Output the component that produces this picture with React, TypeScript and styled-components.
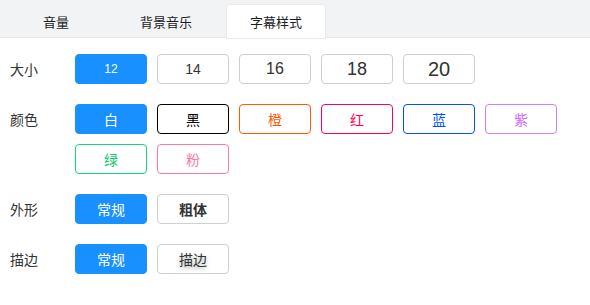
import { useState } from 'react';
import styled, { createGlobalStyle } from 'styled-components';

const GlobalStyle = createGlobalStyle`
  body {
    margin: 0;
    background: #ffffff;
    font-family: 'Noto Sans CJK SC', 'Noto Sans', sans-serif;
  }
`;

const tabs = ['音量', '背景音乐', '字幕样式'];
const sizes = [12, 14, 16, 18, 20];
const colors = [
  { name: '白', color: '#ffffff', border: '#1890ff' },
  { name: '黑', color: '#000000', border: '#000000' },
  { name: '橙', color: '#ff5a00', border: '#ff5a00' },
  { name: '红', color: '#ff0055', border: '#ff0055' },
  { name: '蓝', color: '#0050ff', border: '#0050ff' },
  { name: '紫', color: '#cf6bff', border: '#d47aff' },
  { name: '绿', color: '#12cc6e', border: '#12d67e' },
  { name: '粉', color: '#ff7aa2', border: '#ff7aa2' },
];

const App = () => {
  const [tab, setTab] = useState(2);
  const [size, setSize] = useState(12);
  const [color, setColor] = useState('白');
  const [shape, setShape] = useState('常规');
  const [stroke, setStroke] = useState('常规');

  return (
    <>
      <GlobalStyle />
      <Page>
        <TabBar>
          {tabs.map((t, i) => (
            <Tab key={t} $active={tab === i} onClick={() => setTab(i)}>
              {t}
            </Tab>
          ))}
        </TabBar>
        <Body>
          <Row>
            <Label>大小</Label>
            <Options>
              {sizes.map((s) => (
                <OptionBtn
                  key={s}
                  $active={size === s}
                  $font={s}
                  onClick={() => setSize(s)}
                >
                  {s}
                </OptionBtn>
              ))}
            </Options>
          </Row>
          <Row>
            <Label>颜色</Label>
            <Options>
              {colors.map((c) =>
                color === c.name ? (
                  <OptionBtn key={c.name} $active onClick={() => setColor(c.name)}>
                    {c.name}
                  </OptionBtn>
                ) : (
                  <ColorBtn
                    key={c.name}
                    $color={c.color}
                    $border={c.border}
                    onClick={() => setColor(c.name)}
                  >
                    {c.name}
                  </ColorBtn>
                )
              )}
            </Options>
          </Row>
          <Row>
            <Label>外形</Label>
            <Options>
              <OptionBtn $active={shape === '常规'} onClick={() => setShape('常规')}>
                常规
              </OptionBtn>
              <BoldBtn $active={shape === '粗体'} onClick={() => setShape('粗体')}>
                粗体
              </BoldBtn>
            </Options>
          </Row>
          <Row>
            <Label>描边</Label>
            <Options>
              <OptionBtn $active={stroke === '常规'} onClick={() => setStroke('常规')}>
                常规
              </OptionBtn>
              <StrokeBtn $active={stroke === '描边'} onClick={() => setStroke('描边')}>
                描边
              </StrokeBtn>
            </Options>
          </Row>
        </Body>
      </Page>
    </>
  );
};

export default App;

const Page = styled.div`
  width: 590px;
  height: 305px;
  background: #ffffff;
  overflow: hidden;
`;

const TabBar = styled.div`
  height: 38px;
  padding: 5px 0 0 7px;
  box-sizing: border-box;
  display: flex;
  align-items: flex-end;
  gap: 12px;
  background: #f2f3f5;
  border-bottom: 1px solid #e6e7ea;
`;

const Tab = styled.div<{ $active?: boolean }>`
  width: 98px;
  height: 33px;
  display: flex;
  align-items: center;
  justify-content: center;
  font-size: 13px;
  color: #1d1d1f;
  border-radius: 4px 4px 0 0;
  background: ${({ $active }) => ($active ? '#ffffff' : 'transparent')};
  box-shadow: ${({ $active }) => ($active ? '0 0 0 1px #e9eaed' : 'none')};
  margin-bottom: -1px;
  cursor: pointer;
`;

const Body = styled.div`
  padding: 16px 0 0 10px;
  display: flex;
  flex-direction: column;
  gap: 20px;
`;

const Row = styled.div`
  display: flex;
  align-items: flex-start;
`;

const Label = styled.div`
  width: 65px;
  height: 30px;
  line-height: 30px;
  font-size: 14px;
  color: #333333;
`;

const Options = styled.div`
  width: 500px;
  display: flex;
  flex-wrap: wrap;
  gap: 10px;
`;

const OptionBtn = styled.div<{ $active?: boolean; $font?: number }>`
  width: 72px;
  height: 30px;
  box-sizing: border-box;
  display: flex;
  align-items: center;
  justify-content: center;
  border-radius: 4px;
  font-size: ${({ $font }) => ($font ? `${$font}px` : '14px')};
  font-family: ${({ $font }) =>
    $font ? "'Liberation Sans', Arial, sans-serif" : "'Noto Sans CJK SC', sans-serif"};
  color: ${({ $active }) => ($active ? '#ffffff' : '#333333')};
  background: ${({ $active }) => ($active ? '#1890ff' : '#ffffff')};
  border: 1px solid ${({ $active }) => ($active ? '#1890ff' : '#cfcfcf')};
  cursor: pointer;
`;

const ColorBtn = styled(OptionBtn)<{ $color: string; $border: string }>`
  color: ${({ $color }) => $color};
  border-color: ${({ $border }) => $border};
`;

const BoldBtn = styled(OptionBtn)`
  font-weight: 700;
`;

const StrokeBtn = styled(OptionBtn)`
  text-shadow: 0 2px 4px rgba(0, 0, 0, 0.35);
`;
